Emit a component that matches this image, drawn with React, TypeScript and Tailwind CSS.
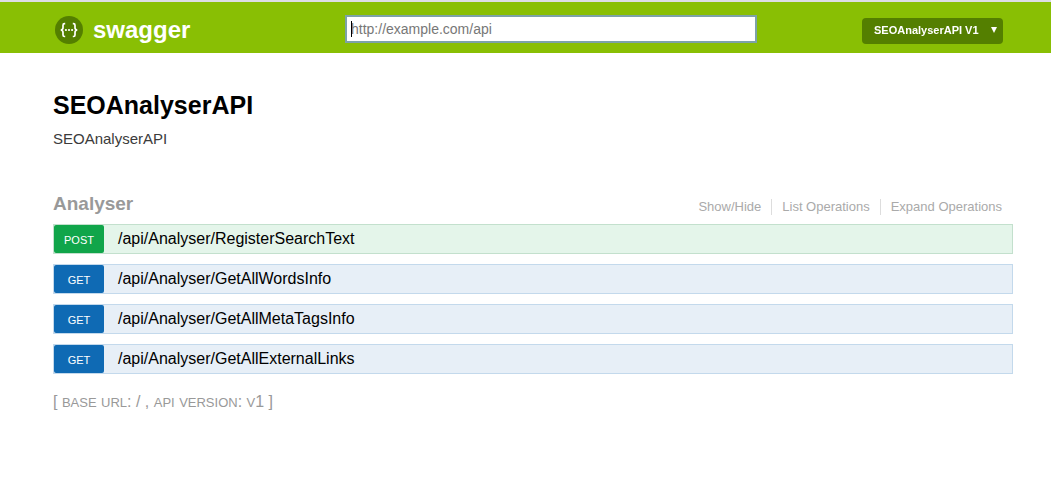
import type { ReactNode } from 'react';

type Operation = { method: 'POST' | 'GET'; path: string };

const operations: Operation[] = [
  { method: 'POST', path: '/api/Analyser/RegisterSearchText' },
  { method: 'GET', path: '/api/Analyser/GetAllWordsInfo' },
  { method: 'GET', path: '/api/Analyser/GetAllMetaTagsInfo' },
  { method: 'GET', path: '/api/Analyser/GetAllExternalLinks' },
];

const styles = {
  POST: { row: 'border-[#c3e0cd] bg-[#e4f5ea]', badge: 'bg-[#10a54a]' },
  GET: { row: 'border-[#c3d9ec] bg-[#e7eff7]', badge: 'bg-[#0f6ab4]' },
};

function Logo() {
  return (
    <svg className="size-7 shrink-0" viewBox="0 0 28 28" fill="none" aria-hidden="true">
      <circle cx="14" cy="14" r="14" fill="#547f00" />
      <g stroke="#fff" strokeWidth="1.7">
        <path d="M10.2 7.6H9.5Q8 7.6 8 9.2V11.8Q8 13.7 5.8 14Q8 14.3 8 16.4V18.9Q8 20.5 9.5 20.5H10.2" />
        <path d="M17.8 7.6H18.5Q20 7.6 20 9.2V11.8Q20 13.7 22.2 14Q20 14.3 20 16.4V18.9Q20 20.5 18.5 20.5H17.8" />
      </g>
      <g fill="#fff">
        <circle cx="10.9" cy="14" r="1.1" />
        <circle cx="14" cy="14" r="1.1" />
        <circle cx="17.1" cy="14" r="1.1" />
      </g>
    </svg>
  );
}

function Header() {
  return (
    <header className="border-t-2 border-[#dddde5] bg-[#89bf04]">
      <div className="grid h-[51px] grid-cols-[290px_minmax(0,412px)_1fr] items-center pt-0.5 pr-12 pl-[55px]">
        <a href="#" className="mt-0.5 flex items-center gap-2.5 text-2xl font-bold text-white">
          <Logo />
          swagger
        </a>
        <div className="relative">
          <input
            type="text"
            aria-label="API URL"
            placeholder="http://example.com/api"
            autoFocus
            className="block h-7 w-full border-2 border-[#7da2a8] bg-white px-1 text-sm text-black caret-transparent outline-none placeholder:text-[#777]"
          />
          <span className="pointer-events-none absolute top-1.5 left-1.5 h-4 w-px bg-black" />
        </div>
        <div className="relative mt-1 justify-self-end">
          <select
            aria-label="API version"
            className="block h-[26px] w-[141px] appearance-none rounded bg-[#547f00] pl-3 text-[11px] font-bold text-white"
          >
            <option>SEOAnalyserAPI V1</option>
          </select>
          <svg className="pointer-events-none absolute top-2 right-1.5 h-2 w-1.5" viewBox="0 0 6 8" aria-hidden="true">
            <path d="M0 1H6L3 7Z" fill="#fff" />
          </svg>
        </div>
      </div>
    </header>
  );
}

function Caps({ children }: { children: ReactNode }) {
  return <span className="text-[13px] uppercase">{children}</span>;
}

export default function App() {
  return (
    <div className="min-h-screen bg-white font-['Liberation_Sans',Arial,sans-serif]">
      <Header />
      <main className="pt-9 pr-[38px] pl-[53px]">
        <h1 className="text-[25px] leading-8 font-bold text-black">SEOAnalyserAPI</h1>
        <p className="mt-2 text-[15px] leading-5 text-[#3b3b3b]">SEOAnalyserAPI</p>

        <section className="mt-[41px]">
          <div className="flex items-center justify-between pb-1.5">
            <h2 className="text-[19px] leading-7 font-bold text-[#999]">
              <a href="#analyser">Analyser</a>
            </h2>
            <ul className="mt-1.5 flex divide-x divide-[#ddd] pr-px text-[13px] leading-4 text-[#aaa]">
              <li className="px-2.5"><a href="#show">Show/Hide</a></li>
              <li className="px-2.5"><a href="#list">List Operations</a></li>
              <li className="px-2.5"><a href="#expand">Expand Operations</a></li>
            </ul>
          </div>
          <ul className="flex flex-col gap-2.5">
            {operations.map(({ method, path }) => (
              <li key={path} className={`flex h-[30px] border ${styles[method].row}`}>
                <a
                  href={`#${path}`}
                  className={`flex w-[50px] items-center justify-center rounded-xs pt-0.5 text-[11px] text-white ${styles[method].badge}`}
                >
                  {method}
                </a>
                <a href={`#${path}`} className="pl-3.5 text-base leading-7 text-black">{path}</a>
              </li>
            ))}
          </ul>
        </section>

        <footer className="mt-4 text-base leading-6 text-[#999]">
          [ <Caps>base</Caps> <Caps>url</Caps>: / , <Caps>api</Caps> <Caps>version</Caps>: <Caps>v</Caps>1 ]
        </footer>
      </main>
    </div>
  );
}
